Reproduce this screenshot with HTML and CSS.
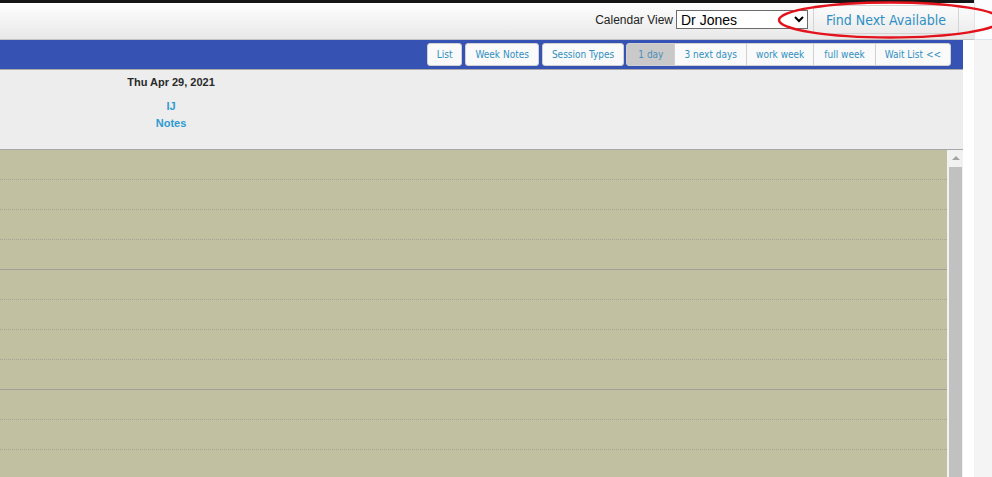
FILE: index.html
```html
<!DOCTYPE html>
<html lang="en">
<head>
    <meta charset="UTF-8">
    <meta name="viewport" content="width=device-width, initial-scale=1.0">
    <title>Calendar</title>
    <link rel="stylesheet" href="styles.css">
</head>
<body>
    <div class="page">
        <div class="top">
            <div class="topline"></div>
            <div class="header">
                <label class="view-label" for="viewselect">Calendar View</label>
                <select id="viewselect" class="view-select">
                    <option>Dr Jones</option>
                    <option>Dr Smith</option>
                </select>
                <button class="find-btn">Find Next Available</button>
            </div>
        </div>
        <div class="side-top"></div>

        <div class="app">
            <div class="toolbar">
                <div class="btn-row">
                    <button class="tb">List</button>
                    <button class="tb">Week Notes</button>
                    <button class="tb">Session Types</button>
                </div>
                <div class="btn-group">
                    <button class="tb active">1 day</button>
                    <button class="tb">3 next days</button>
                    <button class="tb">work week</button>
                    <button class="tb wide">full week</button>
                    <button class="tb">Wait List &lt;&lt;</button>
                </div>
            </div>
            <div class="dayhead">
                <div class="daycol">
                    <div class="date">Thu Apr 29, 2021</div>
                    <a class="daylink" href="#">IJ</a>
                    <a class="daylink" href="#">Notes</a>
                </div>
            </div>
            <div class="grid">
                <div class="slots" id="slots"></div>
                <div class="scrollbar">
                    <div class="arrow"></div>
                    <div class="thumb"></div>
                </div>
            </div>
        </div>
        <div class="gutter"></div>
        <div class="side"></div>
    </div>

    <svg class="mark" width="992" height="48" viewBox="0 0 992 48">
        <ellipse cx="890" cy="20" rx="111" ry="17.5" fill="none" stroke="#e3131d" stroke-width="2.5"/>
    </svg>

    <script>
        // 4 quarter-hour slots per hour, solid line on the hour
        var slots = document.getElementById('slots');
        for (var i = 0; i < 12; i++) {
            var row = document.createElement('div');
            row.className = (i % 4 == 3) ? 'slot hour' : 'slot';
            slots.appendChild(row);
        }
    </script>
</body>
</html>
```
FILE: styles.css
```css
body {
    margin: 0;
    padding: 0;
    font-family: "Liberation Sans", Arial, sans-serif;
    background-color: #fff;
    overflow: hidden;
    height: 477px;
}
.page {
    display: grid;
    grid-template-columns: 963px 11px 18px;
    grid-template-rows: 40px 437px;
    height: 477px;
}
.top {
    grid-column: 1 / 3;
    display: flex;
    flex-direction: column;
}
.topline {
    height: 3px;
    background-color: #151515;
}
.header {
    height: 33px;
    padding-bottom: 3px;
    border-bottom: 1px solid #c4c4c4;
    background: linear-gradient(#fefefe, #e8e8e8);
    display: flex;
    align-items: center;
    justify-content: flex-end;
    padding-right: 15px;
}
.view-label {
    font-size: 12px;
    color: #222;
    margin-right: 3px;
}
.view-select {
    width: 132px;
    height: 19px;
    font-family: "Liberation Sans", Arial, sans-serif;
    font-size: 14px;
    color: #000;
    border: 1px solid #6b6b6b;
    border-radius: 0;
    background-color: #fff;
    padding: 0;
    margin-right: 5px;
}
.find-btn {
    width: 146px;
    height: 29px;
    font-family: "DejaVu Sans Condensed", "DejaVu Sans", sans-serif;
    font-size: 14px;
    color: #2c8fc6;
    background: linear-gradient(#fbfbfb, #ececec);
    border: 1px solid #d4d4d4;
    border-radius: 2px;
    cursor: pointer;
}
.side-top {
    grid-column: 3;
    background-color: #fafcfe;
    border-bottom: 1px solid #dbe5ef;
    border-left: 1px solid #e4e4e4;
}
.app {
    grid-column: 1;
    display: flex;
    flex-direction: column;
    overflow: hidden;
    min-height: 0;
}
.toolbar {
    flex-shrink: 0;
    height: 29px;
    background-color: #3653b3;
    border-bottom: 1px solid #a9a9a9;
    display: flex;
    align-items: center;
    justify-content: flex-end;
    padding-right: 12px;
    gap: 2px;
}
.btn-row {
    display: flex;
    gap: 3px;
}
.btn-group {
    display: flex;
}
.tb {
    height: 23px;
    padding: 0 9px;
    font-family: "DejaVu Sans Condensed", "DejaVu Sans", sans-serif;
    font-size: 10px;
    color: #2f8fc2;
    background-color: #fafafa;
    border: 1px solid #d0d0d0;
    border-radius: 3px;
    cursor: pointer;
}
.btn-group .tb {
    border-radius: 0;
    margin-left: -1px;
}
.btn-group .tb:first-child {
    border-radius: 3px 0 0 3px;
    margin-left: 0;
}
.btn-group .tb:last-child {
    border-radius: 0 3px 3px 0;
}
.tb.active {
    background-color: #c9c9c9;
    color: #4d8fb6;
    padding: 0 11px;
}
.tb.wide {
    padding: 0 10px;
}
.dayhead {
    flex-shrink: 0;
    height: 79px;
    background-color: #ededed;
    border-bottom: 1px solid #a7a7a7;
}
.daycol {
    width: 342px;
    display: flex;
    flex-direction: column;
    align-items: center;
    padding-top: 6px;
}
.date {
    font-size: 11px;
    font-weight: bold;
    color: #2a2a2a;
    margin-bottom: 10px;
}
.daylink {
    font-size: 11px;
    font-weight: bold;
    color: #2d9bd0;
    text-decoration: none;
    line-height: 17px;
}
.grid {
    flex: 1;
    min-height: 0;
    display: flex;
    overflow: hidden;
}
.slots {
    flex: 1;
    background-color: #c1c1a1;
}
.slot {
    height: 29px;
    border-bottom: 1px dotted #a4a49a;
}
.slot.hour {
    border-bottom: 1px solid #a0a098;
}
.scrollbar {
    width: 16px;
    background-color: #f1f1f1;
    padding: 0 1px 0 2px;
    box-sizing: border-box;
}
.arrow {
    width: 0;
    height: 0;
    margin: 6px auto 7px;
    border-left: 4px solid transparent;
    border-right: 4px solid transparent;
    border-bottom: 4px solid #a3a3a3;
}
.thumb {
    height: 320px;
    background-color: #c1c1c1;
}
.gutter {
    grid-column: 2;
    background-color: #fff;
}
.side {
    grid-column: 3;
    background-color: #f4f4f4;
}
.mark {
    position: absolute;
    top: 0;
    left: 0;
    pointer-events: none;
}
```
